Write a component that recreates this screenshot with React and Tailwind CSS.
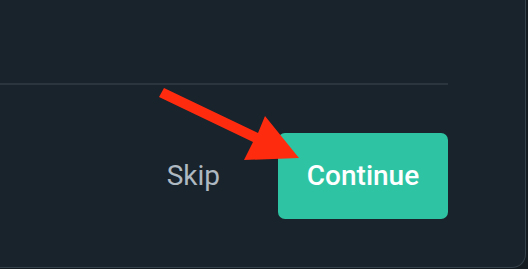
import React from "react";

const Arrow = () => (
  <svg
    className="absolute left-0 top-0 pointer-events-none"
    width="528"
    height="269"
    viewBox="0 0 528 269"
  >
    <polygon
      points="164,88 258,133 265,116 299,158 244,160 253,142 159,97"
      fill="#ff2b0f"
    />
  </svg>
);

const App = () => {
  return (
    <div className="relative w-[528px] h-[269px] bg-[#141b21] overflow-hidden font-['Roboto',sans-serif]">
      <div className="w-[526px] h-[268px] bg-[#19232b] rounded-br-[14px] border-r border-b border-[#34404a]">
        <div className="w-[448px]">
          <div className="h-[85px] border-b-2 border-[#2a353e]"></div>
          <div className="flex items-center justify-end pt-[48px]">
            <button className="text-[28px] text-[#aeb9c1] mr-[58px] leading-none">
              Skip
            </button>
            <button className="w-[170px] h-[86px] rounded-[7px] bg-[#2ec4a3] text-white text-[28px] font-medium leading-none">
              Continue
            </button>
          </div>
        </div>
      </div>
      <Arrow />
    </div>
  );
};

export default App;
